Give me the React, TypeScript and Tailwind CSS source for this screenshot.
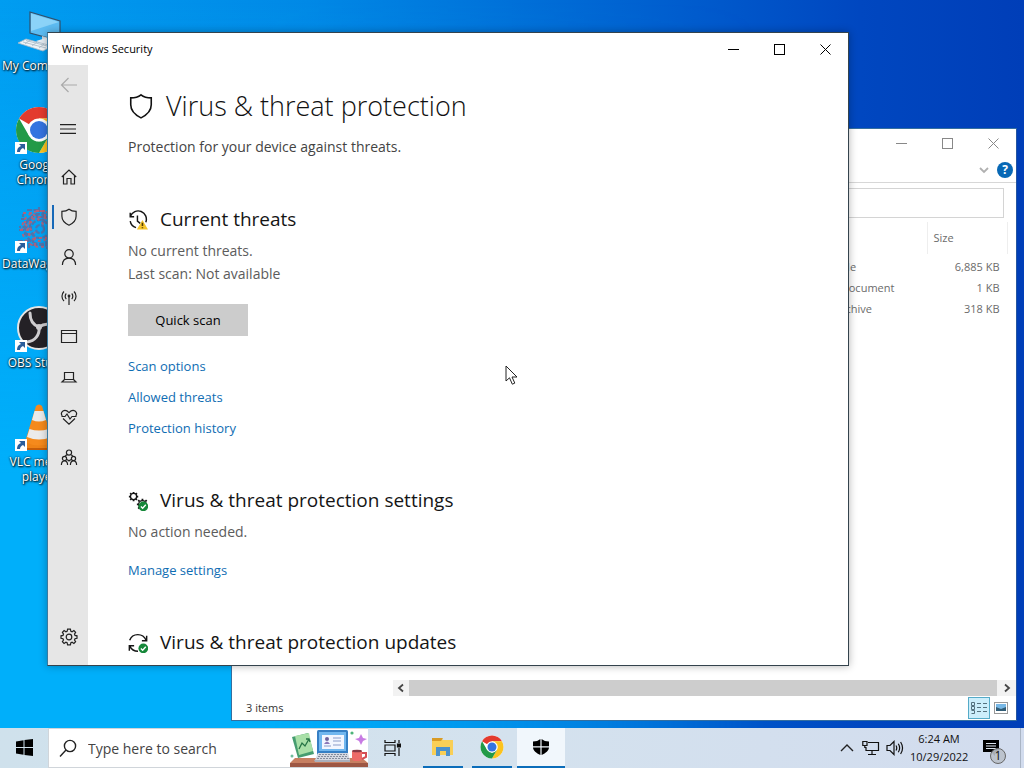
import React from "react";

type Kids = { children: React.ReactNode };

function Line({ size = 18, width = 1.2, children }: Kids & { size?: number; width?: number }) {
  return (
    <svg width={size} height={size} viewBox="0 0 18 18" fill="none" stroke="currentColor" strokeWidth={width} aria-hidden="true">
      {children}
    </svg>
  );
}

const SHIELD = "M9 1.3C7.2 2.7 4.7 3.4 1.9 3.4V8.2C1.9 12.4 4.4 15 9 17.2C13.6 15 16.1 12.4 16.1 8.2V3.4C13.3 3.4 10.8 2.7 9 1.3Z";
const GEAR =
  "M7.6 1.2H10.4L10.9 3.3L12.1 3.8L13.9 2.6L15.6 4.4L14.5 6.1L15 7.4L17 7.8V10.3L15 10.7L14.5 12L15.6 13.7L13.9 15.5L12.1 14.3L10.9 14.8L10.4 16.8H7.6L7.1 14.8L5.9 14.3L4.1 15.5L2.4 13.7L3.5 12L3 10.7L1 10.3V7.8L3 7.4L3.5 6.1L2.4 4.4L4.1 2.6L5.9 3.8L7.1 3.3Z";

function ChromeLogo({ size }: { size: number }) {
  return (
    <svg width={size} height={size} viewBox="0 0 48 48" aria-hidden="true">
      <circle cx="24" cy="24" r="23" fill="#fff" />
      <path d="M24 24L4.1 12.5A23 23 0 0 1 43.9 12.5H24Z" fill="#e33b2e" />
      <path d="M43.9 12.5A23 23 0 0 1 24 47L34 29.7L24 12.5Z" fill="#fcc31e" />
      <path d="M24 47A23 23 0 0 1 4.1 12.5L14 29.7L24 35.5L34 29.7Z" fill="#229a48" />
      <circle cx="24" cy="24" r="11.5" fill="#fff" />
      <circle cx="24" cy="24" r="9" fill="#3474e0" />
    </svg>
  );
}

function ComputerIcon() {
  return (
    <svg width="48" height="48" viewBox="0 0 48 48" aria-hidden="true">
      <path d="M15 5L45 14V34L15 26Z" fill="#5dbcf2" stroke="#31506b" strokeWidth="1.2" />
      <path d="M16 6.5L44 15L16 24Z" fill="#8bd3f8" />
      <path d="M27 29L34 31V36L27 34Z" fill="#c8d5df" />
      <path d="M21 34L31 31L41 36L31 40Z" fill="#e5edf3" />
      <path d="M3 36L11 32L37 39L28 44Z" fill="#eef3f6" stroke="#a7b8c5" strokeWidth=".8" />
      <path d="M8 35L31 41M11 33.5L34 39.5M10 37L15 33M17 39L22 35M24 41L29 37" stroke="#9db2c1" strokeWidth=".7" />
    </svg>
  );
}

function WagonIcon() {
  return (
    <svg width="48" height="48" viewBox="0 0 48 48" fill="none" aria-hidden="true">
      <g stroke="#4f74ad" strokeWidth="2.2" strokeDasharray="5 1.5">
        <path d="M12 5H22V12H35V4M6 14H15V22H4M28 7V18H41M9 29H18V40H30M33 24H43M24 2V9M3 36H14V43M31 30V43H42M38 8V14M4 25H12M8 9V12" />
        <circle cx="25" cy="24" r="9" />
        <circle cx="25" cy="24" r="15" />
        <circle cx="25" cy="24" r="4" />
      </g>
      <g stroke="#b0627c" strokeWidth="1.8" strokeDasharray="3 3">
        <path d="M8 8H17V17H9M21 6H30V14M5 25H14V34M20 41V33H33M37 17V34M10 19L20 28M18 9L30 21" />
        <circle cx="25" cy="24" r="12" />
        <circle cx="25" cy="24" r="18" />
      </g>
    </svg>
  );
}

function ObsIcon() {
  return (
    <svg width="48" height="48" viewBox="0 0 48 48" aria-hidden="true">
      <circle cx="24" cy="24" r="21" fill="#242126" stroke="#e5e5e5" strokeWidth="2" />
      <g fill="none" stroke="#cfcdd0" strokeWidth="3" strokeLinecap="round">
        <path d="M15 9C15 17 18 21 24 23" />
        <path d="M24 23C31 18 38 20 41 26" />
        <path d="M24 23C25 31 20 37 12 38" />
      </g>
      <circle cx="24" cy="23" r="3" fill="#cfcdd0" />
    </svg>
  );
}

function ConeIcon() {
  return (
    <svg width="48" height="48" viewBox="0 0 48 48" aria-hidden="true">
      <path d="M8 36H40L45 46H3Z" fill="#ef8316" />
      <path d="M21 3Q24 0 27 3L38 39Q24 46 10 39Z" fill="#f58a1c" />
      <path d="M19.5 8H28.5L31 17Q24 20 17 17Z" fill="#ebebeb" />
      <path d="M14.5 26Q24 29 33.5 26L36 34Q24 39 12 34Z" fill="#ebebeb" />
      <path d="M3 46H45" stroke="#c75d08" strokeWidth="2" />
    </svg>
  );
}

function Shortcut({ icon, label, badge = true, wide }: { icon: React.ReactNode; label: string; badge?: boolean; wide?: boolean }) {
  return (
    <button className="flex h-[99px] w-full flex-col items-center text-xs leading-[15px] text-white [text-shadow:1px_1px_2px_#000,0_0_2px_#000]">
      <span className="relative mb-[3px]">
        {icon}
        {badge && (
          <span className="absolute bottom-0 left-0 flex size-3 items-center justify-center bg-white">
            <svg width="10" height="10" viewBox="0 0 10 10" aria-hidden="true">
              <path d="M3 1H9V7L7 5C5 6 4 7 4 9H1C1 6 2 4 5 3Z" fill="#2a5d9b" />
            </svg>
          </span>
        )}
      </span>
      <span className={wide ? "w-full pl-px text-left" : "w-16 text-center"}>{label}</span>
    </button>
  );
}

function WindowButtons({ label }: { label: string }) {
  return (
    <div className="flex h-full">
      <button aria-label={`Minimize ${label}`} className="flex w-[46px] items-center justify-center">
        <svg width="11" height="11" stroke="currentColor" fill="none"><path d="M0 5.5H11" /></svg>
      </button>
      <button aria-label={`Maximize ${label}`} className="flex w-[46px] items-center justify-center">
        <svg width="11" height="11" stroke="currentColor" fill="none"><rect x=".5" y=".5" width="10" height="10" /></svg>
      </button>
      <button aria-label={`Close ${label}`} className="flex w-[46px] items-center justify-center">
        <svg width="11" height="11" stroke="currentColor" fill="none"><path d="M.5 .5L10.5 10.5M10.5 .5L.5 10.5" /></svg>
      </button>
    </div>
  );
}

const files = [
  { type: "TAR File", size: "6,885 KB" },
  { type: "Text Document", size: "1 KB" },
  { type: "ZIP archive", size: "318 KB" },
];

function ExplorerWindow() {
  return (
    <section aria-label="File Explorer" className="absolute top-32 right-[7px] bottom-[7px] left-[231px] flex flex-col border border-[#356f9f] border-r-[#2455a0] bg-white text-[11px] text-[#6b6b6b]">
      <div className="flex h-[29px] shrink-0 justify-end text-[#888]"><WindowButtons label="File Explorer" /></div>
      <div className="flex h-[25px] shrink-0 items-center justify-end gap-2 border-b border-[#d7d7d7] pr-[3px]">
        <button aria-label="Expand ribbon">
          <svg width="10" height="8" fill="none" stroke="#b0b0b0" strokeWidth="1.8"><path d="M1 2L5 6L9 2" /></svg>
        </button>
        <button aria-label="Help" className="flex size-4 items-center justify-center rounded-full bg-[#0868b5] text-xs font-bold text-white">?</button>
      </div>
      <input aria-label="Address" className="mt-[5px] mr-3 ml-40 h-[30px] shrink-0 border border-[#d4d4d4]" />
      <table className="mt-1 mr-2 ml-auto w-48 table-fixed">
        <thead>
          <tr className="h-8">
            <th className="w-[111px] border-r border-[#eee]" aria-label="Type" />
            <th className="border-r border-[#eee] pl-1.5 text-left font-normal">Size</th>
          </tr>
        </thead>
        <tbody className="before:block before:h-[3px]">
          {files.map((f) => (
            <tr key={f.size} className="h-[21px]">
              <td className="whitespace-nowrap">{f.type}</td>
              <td className="pr-2 text-right whitespace-nowrap">{f.size}</td>
            </tr>
          ))}
        </tbody>
      </table>
      <div className="mt-auto ml-[161px] flex h-4 shrink-0 bg-[#f2f2f2] text-[#444]">
        <button aria-label="Scroll left" className="flex w-4 items-center justify-center">
          <svg width="8" height="10" fill="none" stroke="currentColor" strokeWidth="1.8"><path d="M6 1.5L2 5L6 8.5" /></svg>
        </button>
        <div className="flex-1 bg-[#cdcdcd]" />
        <button aria-label="Scroll right" className="flex w-[19px] items-center justify-center">
          <svg width="8" height="10" fill="none" stroke="currentColor" strokeWidth="1.8"><path d="M2 1.5L6 5L2 8.5" /></svg>
        </button>
      </div>
      <div className="flex h-6 shrink-0 items-center pr-1 pl-3.5 text-[#333]">
        <span className="flex-1">3 items</span>
        <button aria-label="Details view" className="flex size-[22px] items-center justify-center border border-[#55abc8] bg-[#cceefb]">
          <svg width="16" height="14" fill="none" stroke="#55717e"><path d="M.5 1.5H3.5V4.5H.5ZM.5 5.5H3.5V8.5H.5ZM.5 9.5H3.5V12.5H.5M6 2.5H10M12 2.5H16M6 6.5H10M12 6.5H16M6 10.5H10M12 10.5H16" /></svg>
        </button>
        <button aria-label="Thumbnail view" className="flex h-[22px] w-[22px] items-center justify-center">
          <svg width="14" height="12"><rect x=".5" y=".5" width="13" height="11" fill="#fff" stroke="#999" /><path d="M2 2H12V9H2Z" fill="#78b8e6" /><path d="M2 5L7 7L12 5V9H2Z" fill="#315c75" /></svg>
        </button>
      </div>
    </section>
  );
}

const navItems = [
  { label: "Home", icon: <path d="M1.8 9L9 2L16.2 9M3.5 7.5V16H7V10.5H11V16H14.5V7.5" /> },
  { label: "Virus & threat protection", icon: <path d={SHIELD} /> },
  { label: "Account protection", icon: <><circle cx="9" cy="5.8" r="4.2" /><path d="M2.4 17C2.6 12.8 5 10.2 9 10.2S15.4 12.8 15.6 17" /></> },
  { label: "Firewall & network protection", icon: <><path d="M9 8V17M6.3 11.2C4.8 9.7 4.8 7 6.3 5.5M11.7 11.2C13.2 9.7 13.2 7 11.7 5.5M4 13C1.3 10.4 1.3 6 4 3.5M14 13C16.7 10.4 16.7 6 14 3.5" /><circle cx="9" cy="8" r=".8" /></> },
  { label: "App & browser control", icon: <path d="M1.5 2.5H16.5V14.5H1.5ZM1.5 5.5H16.5" /> },
  { label: "Device security", icon: <path d="M4.5 4.5H13.5V11.5H4.5ZM4.5 11.5L2 14H16L13.5 11.5" /> },
  { label: "Device performance & health", icon: <path d="M2.2 8C-.3 4 4.5-.2 9 4.6C13.5-.2 18.3 4 15.8 8M3 10.5L9 16.2L15 10.5M1.5 8.5H5L7 6L10 11L12 8.5H16.5" /> },
  { label: "Family options", icon: <><circle cx="9" cy="4.6" r="2.6" /><circle cx="4.5" cy="10.4" r="2.1" /><circle cx="13.5" cy="10.4" r="2.1" /><path d="M1.4 17C1.4 11.4 7.6 11.4 7.6 17M10.4 17C10.4 11.4 16.6 11.4 16.6 17M5.3 8.3C5.6 7.6 6.3 7 7.2 6.9M12.7 8.3C12.4 7.6 11.7 7 10.8 6.9M7.2 11.5L9 13L10.8 11.5" /></> },
];

function NavButton({ label, children, active }: Kids & { label: string; active?: boolean }) {
  return (
    <button aria-label={label} className="flex h-10 w-full shrink-0 items-center">
      <span className={active ? "ml-1 h-6 w-0.5 bg-[#1769b8]" : "ml-1 h-6 w-0.5"} />
      <span className="ml-1.5">{children}</span>
    </button>
  );
}

function CheckBadge() {
  return <><circle cx="13.8" cy="13.8" r="4.4" fill="#16883a" stroke="none" /><path d="M11.6 13.9L13.2 15.5L16 12.4" stroke="#fff" strokeWidth="1.2" /></>;
}

function ThreatIcon() {
  return (
    <Line size={20} width={1.3}>
      <path d="M2.2 5.5A7.4 7.4 0 1 1 16 11M2 2.5V6H5.5M2 10A7.5 7.5 0 0 0 7.2 15.9M8.5 5V10L11 12" />
      <path d="M13 9L18 17.5H8Z" fill="#f5c52b" stroke="none" />
      <path d="M13 11.5V14.5M13 15.5V16.5" stroke="#513b00" strokeWidth="1.4" />
    </Line>
  );
}

function GearsIcon() {
  return (
    <Line size={20}>
      <circle cx="5" cy="5" r="2.8" />
      <path d="M5 .8V2.2M5 7.8V9.2M.8 5H2.2M7.8 5H9.2M2 2L3 3M7 7L8 8M8 2L7 3M2 8L3 7" strokeWidth="1.6" />
      <circle cx="13" cy="12" r="3.4" />
      <path d="M13 7V8.5M9.2 8.2L10.3 9.3M8 12H9.5M9.2 15.8L10.4 14.6M16.8 8.2L15.7 9.3" strokeWidth="1.6" />
      <CheckBadge />
    </Line>
  );
}

function UpdateIcon() {
  return (
    <Line size={20} width={1.3}>
      <path d="M1.5 6.5C4-.2 13.5-.2 16.3 6.5M16.8 2.5V7H12.5M1.2 16V11.5H5.5M1.6 11.8C3 14.7 5.5 16.5 9 16.5" />
      <CheckBadge />
    </Line>
  );
}

function SectionTitle({ icon, children }: Kids & { icon: React.ReactNode }) {
  return <h2 className="flex h-[34px] items-center gap-3 text-[19px] text-[#151515]">{icon}{children}</h2>;
}

function TextLink({ children }: Kids) {
  return <a href="#" className="block w-fit text-[13px] leading-5 text-[#0f6db3]">{children}</a>;
}

function SecurityWindow() {
  return (
    <section aria-label="Windows Security" className="absolute top-8 right-[175px] bottom-[62px] left-[47px] flex flex-col border border-[#34434d] border-l-[#3979a0] bg-white shadow-[0_0_8px_rgba(0,0,0,0.3)]">
      <header className="flex h-8 shrink-0 items-center justify-between pl-3.5 text-[11px] text-black">
        <span>Windows Security</span>
        <WindowButtons label="Windows Security" />
      </header>
      <div className="flex min-h-0 flex-1">
        <nav className="flex w-10 shrink-0 flex-col bg-[#e6e6e6] pb-2 text-[#222]">
          <div className="text-[#aaa]"><NavButton label="Back"><Line><path d="M17 9H1.5M8.5 2L1.5 9L8.5 16" /></Line></NavButton></div>
          <div className="mt-1 mb-2"><NavButton label="Menu"><Line size={16} width={1.3}><path d="M0 4H18M0 9H18M0 14H18" /></Line></NavButton></div>
          {navItems.map((n, i) => <NavButton key={n.label} label={n.label} active={i === 1}><Line>{n.icon}</Line></NavButton>)}
          <div className="mt-auto"><NavButton label="Settings"><Line><path d={GEAR} /><circle cx="9" cy="9" r="2.8" /></Line></NavButton></div>
        </nav>
        <main className="flex-1 overflow-hidden px-10 pt-[21px] text-sm text-[#5c5c5c]">
          <h1 className="flex h-10 items-center gap-3 text-[27px] font-light text-[#111]"><Line size={26} width={1.1}><path d={SHIELD} /></Line>Virus &amp; threat protection</h1>
          <p className="mt-[11px] leading-5 text-[#444]">Protection for your device against threats.</p>
          <div className="mt-[46px]">
            <SectionTitle icon={<ThreatIcon />}>Current threats</SectionTitle>
            <p className="mt-0.5 leading-[23px]">No current threats.<br />Last scan: Not available</p>
            <button className="mt-[19px] h-8 w-[120px] bg-[#cccccc] text-[13px] text-black">Quick scan</button>
            <div className="mt-5 flex flex-col gap-[11px]">
              <TextLink>Scan options</TextLink>
              <TextLink>Allowed threats</TextLink>
              <TextLink>Protection history</TextLink>
            </div>
          </div>
          <div className="mt-[46px]">
            <SectionTitle icon={<GearsIcon />}>Virus &amp; threat protection settings</SectionTitle>
            <p className="mt-0.5 mb-[17px] leading-[23px]">No action needed.</p>
            <TextLink>Manage settings</TextLink>
          </div>
          <div className="mt-[46px]">
            <SectionTitle icon={<UpdateIcon />}>Virus &amp; threat protection updates</SectionTitle>
          </div>
        </main>
      </div>
    </section>
  );
}

function DeskArt() {
  return (
    <svg width="78" height="38" viewBox="0 0 78 38" className="shrink-0" aria-hidden="true">
      <path d="M5 29H72L78 34V38H0V34Z" fill="#c77f61" /><path d="M0 34H78V38H0Z" fill="#9d5744" />
      <path d="M2 8L18 4L24 25L8 29Z" fill="#469d70" /><path d="M5 7L19 4L23 22L9 26Z" fill="#a9e0a8" />
      <path d="M9 20L12 14L15 17L19 10M16 10L19 10L20 13" fill="none" stroke="#267446" strokeWidth="1.3" />
      <rect x="27" y="1" width="31" height="25" rx="1.5" fill="#357fc4" /><rect x="29" y="3" width="27" height="19" fill="#71b7ef" />
      <rect x="32" y="6" width="22" height="14" fill="#f2f6ff" /><circle cx="37" cy="10" r="2" fill="#6e629e" /><path d="M34 15Q37 10 40 15Z" fill="#8c78b9" />
      <path d="M43 9H51M43 12H51M34 17H41M43 16H51" stroke="#899cca" strokeWidth="1.2" />
      <path d="M28 24H58L60 31H25Z" fill="#d5d9e2" /><path d="M29 25.5H57M28 27.5H58M27 29.5H59" stroke="#858d9c" strokeDasharray="2 1" /><path d="M24 31H60V33H25Z" fill="#aab0bd" />
      <path d="M62 22H72V29Q72 32 69 32H65Q62 32 62 29Z" fill="#ed6b68" /><path d="M72 24H76V28L72 30" stroke="#d54d54" strokeWidth="2" fill="none" /><ellipse cx="67" cy="22" rx="5" ry="1.3" fill="#883a45" />
      <path d="M71 5L73 9L77 10L73 12L71 16L69 12L65 10L69 9Z" fill="#c77be3" /><circle cx="62" cy="4" r="1.6" fill="#4db479" /><circle cx="2" cy="27" r="1.5" fill="#70bd9c" />
    </svg>
  );
}

function Task({ label, running, active, children }: Kids & { label: string; running?: boolean; active?: boolean }) {
  return (
    <button aria-label={label} className={active ? "flex h-full w-12 flex-col items-center bg-[#f1f7fc]" : "flex h-full w-12 flex-col items-center"}>
      <span className="flex flex-1 items-center">{children}</span>
      <span className={active ? "h-0.5 w-full bg-[#0b6dba]" : running ? "h-0.5 w-10 bg-[#0b6dba]" : "h-0.5"} />
    </button>
  );
}

function Taskbar() {
  return (
    <footer className="flex h-10 shrink-0 bg-linear-to-r from-[#cfe1ec] via-[#d4e2ee] to-[#d2dcee] text-[#111]">
      <Task label="Start">
        <svg width="17" height="17" fill="#000"><path d="M0 2.4L7.5 1.3V8H0ZM8.5 1.1L17 0V8H8.5ZM0 9H7.5V15.7L0 14.6ZM8.5 9H17V17L8.5 15.9Z" /></svg>
      </Task>
      <div className="flex w-80 items-end border border-r-0 border-[#d0d5da] bg-white">
        <label htmlFor="search" className="mr-2.5 self-center pl-2.5">
          <svg width="19" height="19" fill="none" stroke="#222" strokeWidth="1.4"><circle cx="11" cy="7" r="5.6" /><path d="M7 11L1 17.5" /></svg>
        </label>
        <input id="search" aria-label="Search" placeholder="Type here to search" className="h-full min-w-0 flex-1 bg-transparent text-sm outline-none placeholder:text-[#444]" />
        <DeskArt />
      </div>
      <Task label="Task View">
        <svg width="17" height="17" fill="none" stroke="#111" strokeWidth="1.2"><path d="M1 1V3.5H11V1M1 6H11V12H1ZM1 17V14.5H11V17M15 1V4M15 9V17" /><path d="M13.5 5H16.5V8H13.5Z" fill="#111" /></svg>
      </Task>
      <div className="ml-[3px] flex gap-px">
        <Task label="File Explorer" running>
          <svg width="22" height="20" viewBox="0 0 22 20"><path d="M0 1H9L11 3H21V18H0Z" fill="#f9cf56" /><path d="M0 1H11L9 4H0Z" fill="#d99b25" /><path d="M4 10H18V19H14V14H8V19H4Z" fill="#4b91cc" /></svg>
        </Task>
        <Task label="Google Chrome" running><ChromeLogo size={24} /></Task>
        <Task label="Windows Security" active>
          <svg width="18" height="18" viewBox="0 0 18 18"><path d="M8.4 1V8.3H1V3.5C4 3.5 6.5 2.7 8.4 1ZM9.6 1C11.5 2.7 14 3.5 17 3.5V8.3H9.6ZM1 9.5H8.4V17C4 15 1.3 12.8 1 9.5ZM9.6 9.5H17C16.7 12.8 14 15 9.6 17Z" /></svg>
        </Task>
      </div>
      <div className="ml-auto flex items-center">
        <button aria-label="Show hidden icons" className="mr-2"><svg width="14" height="10" fill="none" stroke="#222" strokeWidth="1.4"><path d="M1 8L7 2L13 8" /></svg></button>
        <button aria-label="Network" className="mr-1.5"><svg width="18" height="16" fill="none" stroke="#111" strokeWidth="1.2"><path d="M6 2.5H16.5V10.5H4V7M10 10.5V14M6 14.5H14M.8 1.5H5V5.5H.8ZM2.8 5.5V8" /></svg></button>
        <button aria-label="Volume" className="mr-1.5"><svg width="18" height="16" fill="none" stroke="#111" strokeWidth="1.2"><path d="M1 5.5H4L8 1.5V14.5L4 10.5H1ZM10 5.5Q11.5 8 10 10.5M12.3 3.8Q15 8 12.3 12.2M14.6 2Q18.5 8 14.6 14" /></svg></button>
        <time dateTime="2022-10-29T06:24" className="w-[58px] text-center text-[11px] leading-[18px] whitespace-nowrap">6:24 AM<br />10/29/2022</time>
        <button aria-label="1 notification" className="relative mr-4 ml-3 size-6">
          <svg width="18" height="18" viewBox="0 0 18 18" className="ml-0.5"><path d="M1 1H17V13H13V17L9 13H1Z" /><path d="M4 4.5H14M4 7H14M4 9.5H14" stroke="#dce4ee" /></svg>
          <span className="absolute -right-0.5 -bottom-1 flex size-4 items-center justify-center rounded-full border border-[#666] bg-[#b9c0c9]/90 text-xs">1</span>
        </button>
        <span className="h-10 w-1 border-l border-[#aab5c5]" />
      </div>
    </footer>
  );
}

export default function App() {
  return (
    <div className="flex h-screen flex-col overflow-hidden font-['Open_Sans','Noto_Sans',sans-serif]">
      <div className="relative min-h-0 flex-1 bg-[linear-gradient(90deg,#009df1_0%,#0089e6_30%,#005bcd_68%,#0047c0_84%,#003eb8_100%)]">
        <div className="absolute inset-0 bg-[linear-gradient(180deg,transparent,#00affa_65%)] mask-[linear-gradient(90deg,black_25%,transparent_75%)]" />
        <div className="absolute top-[7px] left-px w-[76px]">
          <Shortcut icon={<ComputerIcon />} label="My&nbsp;Computer" badge={false} wide />
          <Shortcut icon={<ChromeLogo size={48} />} label="Google Chrome" />
          <Shortcut icon={<WagonIcon />} label="DataWagon" wide />
          <Shortcut icon={<ObsIcon />} label="OBS&nbsp;Studio" />
          <Shortcut icon={<ConeIcon />} label="VLC&nbsp;media player" />
        </div>
        <ExplorerWindow />
        <SecurityWindow />
        <svg width="14" height="21" viewBox="0 0 14 21" className="absolute top-[365px] left-[505px]" aria-hidden="true">
          <path d="M1 1V16L4.5 12.8L7.3 19.2L9.8 18.1L7 12H12Z" fill="#fff" stroke="#222" />
        </svg>
      </div>
      <Taskbar />
    </div>
  );
}
